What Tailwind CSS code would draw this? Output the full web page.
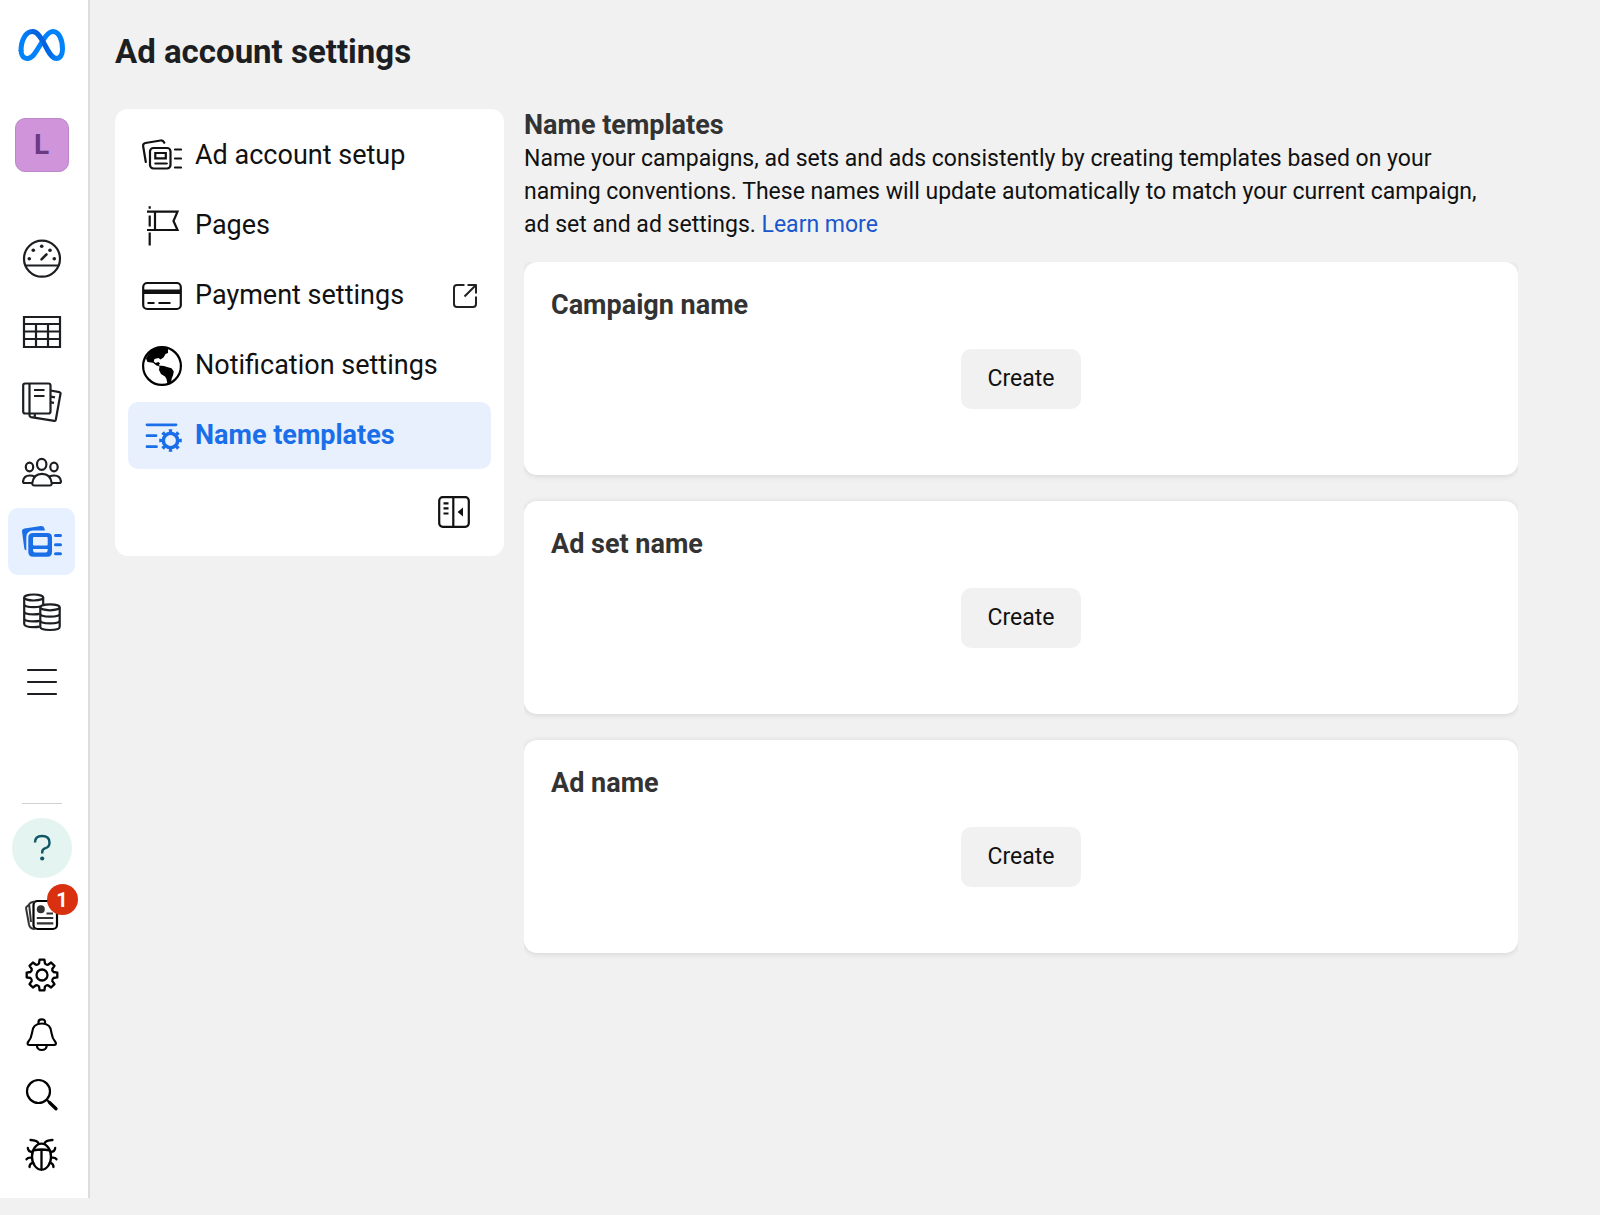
<!DOCTYPE html>
<html lang="en">
  <head>
    <meta charset="UTF-8" />
    <meta name="viewport" content="width=device-width, initial-scale=1.0" />
    <title>Ad account settings</title>
    <script src="https://cdn.jsdelivr.net/npm/@tailwindcss/browser@4"></script>
  </head>
  <body class="bg-[#f1f1f1] font-['Roboto',sans-serif] text-[#1c1e21] antialiased">
    <div class="flex min-h-screen">
      <!--==============  SIDEBAR  ==============-->
      <aside class="mb-[17px] flex w-[90px] shrink-0 flex-col items-center border-r-2 border-[#dcdcde] bg-white pr-[5px] text-[#1c1e21]">
        <a href="#" aria-label="Home" class="mt-[26px]">
          <svg class="h-10 w-[50px]" viewBox="0 0 50 40" fill="none">
            <defs>
              <linearGradient id="metaBlue" x1="4" y1="30" x2="40" y2="34" gradientUnits="userSpaceOnUse">
                <stop offset="0" stop-color="#0082fb" />
                <stop offset=".25" stop-color="#0064e0" />
                <stop offset=".7" stop-color="#0064e0" />
                <stop offset="1" stop-color="#0082fb" />
              </linearGradient>
            </defs>
            <path d="M25 16C29 9 32 5.500 36 5.500C42 5.500 45.500 14 45.500 23C45.500 29 43 32.500 39 32.500" stroke="#0082fb" stroke-width="5" />
            <path d="M25 16C19 26 15.500 32.500 10.500 32.500C6.500 32.500 4 29.500 4 24" stroke="#0082fb" stroke-width="5" />
            <path d="M4 25C4 13.500 9 5.500 15.500 5.500C26 5.500 30 32.500 39.500 32.500" stroke="url(#metaBlue)" stroke-width="5" />
          </svg>
        </a>

        <button type="button" class="mt-[52px] flex size-[54px] items-center justify-center rounded-[10px] border border-[#bd86c9] bg-[#cf94d9] text-[28px] font-bold text-[#6b3a85]">L</button>

        <nav class="mt-14 flex flex-col items-center gap-[3px]" aria-label="Tools">
          <a href="#" aria-label="Account overview" class="flex size-[67px] items-center justify-center">
            <svg class="size-10 overflow-visible" viewBox="0 3 40 40" fill="none" stroke="currentColor" stroke-width="2.200">
              <circle cx="20" cy="19.700" r="18" />
              <path d="M3.500 26.500h33" />
              <path d="M19.500 20.300l5-5" stroke-width="2.500" stroke-linecap="round" />
              <g fill="currentColor" stroke="none"><circle cx="7.300" cy="19.700" r="1.800" /><circle cx="11.300" cy="11.300" r="1.800" /><circle cx="19.700" cy="7.300" r="1.800" /><circle cx="28" cy="11.300" r="1.800" /><circle cx="32.300" cy="19.700" r="1.800" /></g>
            </svg>
          </a>
          <a href="#" aria-label="Campaigns" class="flex size-[67px] items-center justify-center">
            <svg class="size-10" viewBox="0 0 40 40" fill="none" stroke="currentColor" stroke-width="2.200">
              <path d="M2 5h36v30H2zM2 12h36M2 19.500h36M2 27h36M14 12v23M26 12v23" />
            </svg>
          </a>
          <a href="#" aria-label="Ads reporting" class="flex size-[67px] items-center justify-center">
            <svg class="size-10" viewBox="0 0 40 40" fill="none" stroke="currentColor" stroke-width="2.200" stroke-linejoin="round">
              <rect x="1.200" y="1.500" width="27.300" height="30" rx="2" />
              <path d="M7.500 1.500v30M12 8h10.500M12 14h10.500" />
              <path d="M28.500 8.500l9 1.700q1.300.3 1 1.600L33.800 37.800q-.3 1.200-1.500 1L9 35.200q-1.500-.3-1.500-2V31.500M29 14.600l4 .8M29 20.300l3 .6M13 32l-.3 2.500" />
            </svg>
          </a>
          <a href="#" aria-label="Audiences" class="flex size-[67px] items-center justify-center">
            <svg class="size-10" viewBox="0 0 40 40" fill="none" stroke="currentColor" stroke-width="2.200" stroke-linejoin="round">
              <ellipse cx="19.700" cy="12.300" rx="4.700" ry="5.500" />
              <ellipse cx="7.500" cy="15" rx="3.700" ry="4.300" />
              <ellipse cx="32" cy="15" rx="3.700" ry="4.300" />
              <path d="M12.500 33.500h15q2.500 0 2.200-2.500Q28.500 21.800 20 21.800T10.300 31q-.3 2.500 2.200 2.500Z" />
              <path d="M10 31H2.500Q.9 31 1.100 29Q2 23.500 7.700 23.500q3 0 5 1.200M30 31h7.300q1.800 0 1.600-2Q38 23.500 32.300 23.500q-3 0-5 1.200" />
            </svg>
          </a>
          <a href="#" aria-label="Ad account settings" aria-current="page" class="flex size-[67px] items-center justify-center rounded-[10px] bg-[#e7f0fe] text-[#1b6fe6]">
            <svg class="size-10" viewBox="0 0 40 40" fill="currentColor">
              <path d="M0 9.500Q-.2 7 2.500 6.500L19 4q2.500-.3 3.300 2l.7 2.500H11Q4.500 9 4.300 15v13.500q-1.800-.5-2-2Z" />
              <path fill-rule="evenodd" d="M11 11h14.500q4.500 0 4.500 4.500V30q0 4.700-4.500 4.700H11q-4.700 0-4.700-4.700V15.500Q6.300 11 11 11ZM12 15q-1 0-1 1v6.500q0 1 1 1h12.700q1 0 1-1V16q0-1-1-1ZM11.500 27q-.5 0-.5.500 0 3 2 3h10.700q2 0 2-3 0-.5-.5-.5Z" />
              <path d="M33.500 13.500h5M33.500 22.700h5M33.500 31.800h5" stroke="currentColor" stroke-width="3" stroke-linecap="round" />
            </svg>
          </a>
          <a href="#" aria-label="Billing" class="flex size-[67px] items-center justify-center">
            <svg class="size-10" viewBox="0 0 40 40" fill="none" stroke="currentColor" stroke-width="2.200">
              <ellipse cx="11.700" cy="5.500" rx="9.500" ry="3" />
              <path d="M2.200 5.500V32q0 3 9.500 3.200 3.500 0 6-.5M21.200 5.500v6.500M2.200 12q0 3.200 9.500 3.200 4 0 6.500-.7M2.200 19.200q0 3.200 9.500 3.200 3.500 0 6-.5M2.200 26.200q0 3.200 9.500 3.200 3.500 0 6-.5" />
              <ellipse cx="28" cy="15.300" rx="9.700" ry="3" />
              <path d="M18.300 15.300v19.500q0 3.200 9.700 3.200t9.700-3.200V15.300M18.300 21.500q0 3.200 9.700 3.200t9.700-3.200M18.300 28.200q0 3.200 9.700 3.200t9.700-3.200" />
            </svg>
          </a>
          <button type="button" aria-label="All tools" class="flex size-[67px] items-center justify-center">
            <svg class="size-10" viewBox="0 0 40 40" fill="none" stroke="currentColor" stroke-width="2.200" stroke-linecap="round">
              <path d="M6 8h28M6 20h28M6 32h28" />
            </svg>
          </button>
        </nav>

        <div class="mt-auto flex flex-col items-center pb-[13px] text-black">
          <hr class="mb-[14px] w-10 border-[#cfd0d2]" />
          <button type="button" aria-label="Help" class="flex size-[60px] items-center justify-center rounded-full bg-[#e4f4f0] text-[#0e5566]">
            <svg class="size-10" viewBox="0 0 40 40" fill="none" stroke="currentColor" stroke-width="2.400">
              <path d="M13 14.500Q13 8 20 8q7.500 0 7.500 6.500 0 4.500-4 5.700-3.300 1-3.300 4V25.500" />
              <circle cx="20.200" cy="30.500" r="2.100" fill="currentColor" stroke="none" />
            </svg>
          </button>
          <button type="button" aria-label="News, 1 new" class="relative mt-[7px] flex size-[60px] items-center justify-center">
            <svg class="size-10" viewBox="0 0 40 40" fill="none" stroke="currentColor" stroke-width="2.200" stroke-linejoin="round">
              <rect x="11.500" y="6" width="23.500" height="28" rx="4" />
              <circle cx="18.800" cy="14.300" r="4" fill="#333" stroke="none" />
              <path d="M24.500 18.500h6.500M14.800 23h16.500M14.800 28.300h16.500" stroke="#333" />
              <path d="M12.500 6.500L8.500 7.800Q7 8.500 7.200 10L9 27M7.300 9.500L5.500 11Q3.700 12 4.200 14L7 29.500q1 4.500 6 4.500" stroke="#333" stroke-width="2" />
            </svg>
            <span class="absolute -top-px left-[35px] flex size-[31px] items-center justify-center rounded-full bg-[#d9300f] text-xl font-bold text-white">1</span>
          </button>
          <button type="button" aria-label="Settings" class="flex size-[60px] items-center justify-center">
            <svg class="size-10" viewBox="-20 -20 40 40" fill="none" stroke="currentColor" stroke-width="2.300" stroke-linejoin="round">
              <path d="M-3-11.500-2.400-15.300H2.400L3-11.500Q4.600-9.800 6-10.250L9.100-12.500 12.500-9.100 10.250-6Q9.800-4.600 11.500-3L15.300-2.400V2.400L11.500 3Q9.800 4.600 10.250 6L12.500 9.100 9.100 12.500 6 10.250Q4.600 9.800 3 11.500L2.400 15.300H-2.400L-3 11.500Q-4.600 9.800-6 10.250L-9.100 12.500-12.500 9.100-10.250 6Q-9.800 4.600-11.500 3L-15.300 2.400V-2.400L-11.500-3Q-9.800-4.600-10.250-6L-12.500-9.100-9.100-12.500-6-10.250Q-4.600-9.800-3-11.500Z" />
              <circle r="5.500" />
            </svg>
          </button>
          <button type="button" aria-label="Notifications" class="flex size-[60px] items-center justify-center">
            <svg class="size-10" viewBox="0 0 40 40" fill="none" stroke="currentColor" stroke-width="2.200" stroke-linejoin="round">
              <path d="M16.500 8.500V7q0-2.700 3.300-2.700T23 7v1.500" />
              <path d="M7.500 30q-2.500 0-1.700-2.500 3.700-4.500 4.200-9.500.5-9.500 9.800-9.500t9.700 9.500q.5 5 4.200 9.500.8 2.500-1.700 2.500Z" />
              <path d="M14.800 30.500q.5 4.500 5 4.500t5-4.500" />
            </svg>
          </button>
          <button type="button" aria-label="Search" class="flex size-[60px] items-center justify-center">
            <svg class="size-10" viewBox="0 0 40 40" fill="none" stroke="currentColor" stroke-width="2.200">
              <circle cx="16.500" cy="16.500" r="11.500" />
              <path d="M24.800 24.800l2.700 2.700" />
              <path d="M27.500 27.500l6.500 6.300" stroke-width="3.300" stroke-linecap="round" />
            </svg>
          </button>
          <button type="button" aria-label="Report a problem" class="flex size-[60px] items-center justify-center">
            <svg class="size-10" viewBox="0 0 40 40" fill="none" stroke="currentColor" stroke-width="2.300" stroke-linecap="round">
              <ellipse cx="19.500" cy="21.700" rx="9.500" ry="13" />
              <path d="M11.500 15.500q8-2 16 0M19.500 14.500v20M8.500 5q7 .3 8 3.500M30.500 5q-7 .3-8 3.500" />
              <path d="M5.800 13q.5 3.800 4.500 4M33.200 13q-.5 3.800-4.500 4M4.500 24.300q1.500-2 5-1.500M34.500 24.300q-1.500-2-5-1.500M7.500 32q-.3-3 3.500-4.500M31.500 32q.3-3-3.500-4.500" />
            </svg>
          </button>
        </div>
      </aside>

      <!--==============  PAGE  ==============-->
      <div class="min-w-0 flex-1 pt-8 pr-[82px] pl-[25px]">
        <h1 class="text-[33px] leading-10 font-bold">Ad account settings</h1>

        <div class="mt-[37px] flex items-start gap-5">
          <!-- Settings menu -->
          <nav class="w-[389px] shrink-0 rounded-[13px] bg-white p-[13px] text-[27px] text-[#111]" aria-label="Settings">
            <ul class="space-y-[3px]">
              <li>
                <a href="#" class="flex h-[67px] items-center gap-[13px] px-[14px]">
                  <svg class="size-10" viewBox="0 0 40 40" fill="none" stroke="currentColor" stroke-width="2.200" stroke-linecap="round">
                    <rect x="8" y="12" width="20.500" height="20.500" rx="3.500" />
                    <path d="M13.300 17h10.500v5.300H13.300zM13.300 27.500h11.500M33 13.500h6M33 22.500h6M33 31.500h6" />
                    <path d="M3.800 26L1.200 10.500Q.7 7.500 3.500 7L18.500 4.500q2.700-.3 3.800 2.200" />
                  </svg>
                  Ad account setup
                </a>
              </li>
              <li>
                <a href="#" class="flex h-[67px] items-center gap-[13px] px-[14px]">
                  <svg class="size-10" viewBox="0 0 40 40" fill="none" stroke="currentColor" stroke-width="2.200">
                    <path d="M7.700.3v2.500M7.700 9.500v11M7.700 26.500v13M5 5.700h30.500l-4 9.300 4 9H5M13 5.700V24" />
                  </svg>
                  Pages
                </a>
              </li>
              <li>
                <a href="#" class="flex h-[67px] items-center gap-[13px] px-[14px]">
                  <svg class="size-10" viewBox="0 0 40 40" fill="none" stroke="currentColor" stroke-width="2.200">
                    <rect x="1.200" y="7" width="37.600" height="26" rx="4" />
                    <path d="M1 15.700h38" stroke-width="4.500" />
                    <path d="M5.500 27h7M16.500 27h12" />
                  </svg>
                  Payment settings
                  <svg class="ml-auto size-6" viewBox="0 0 24 24" fill="none" stroke="#222" stroke-width="2" stroke-linejoin="round">
                    <path d="M11.500 1H4Q1 1 1 4v16q0 3 3 3h16q3 0 3-3v-7.500M14.500 1H23v8.500M23 1L11.500 12.500" />
                  </svg>
                </a>
              </li>
              <li>
                <a href="#" class="flex h-[67px] items-center gap-[13px] px-[14px]">
                  <svg class="size-10" viewBox="0 0 40 40" fill="#000">
                    <circle cx="20" cy="20" r="18.900" fill="none" stroke="#000" stroke-width="2.200" />
                    <path d="M4 12.500Q8 3.500 15 1.500q6-1.500 11 .5v5l-2.500 1-2 3.500-3 2-2-1.500-4 1-.8 2.500 1.800 1.500 3-1 1.500 1.500-1.500 2L22 20l3 1 4.500 1.200 2.300 3.300-.8 4-1.300 3-.7 4.500-3.500 1.500-1-5.500-1.500-2.500-4-2.500-2-4 .5-3.500-3-1-3.500-2.800-5.500-.7Z" />
                  </svg>
                  Notification settings
                </a>
              </li>
              <li>
                <a href="#" aria-current="page" class="flex h-[67px] items-center gap-[13px] rounded-[10px] bg-[#e8f0fe] px-[14px] font-bold text-[#1a6fe8]">
                  <svg class="size-10" viewBox="0 0 40 40" fill="none" stroke="currentColor" stroke-width="2.800">
                    <path d="M5 8.800h29M5 19.700h9M5 30.700h9.500" stroke-linecap="round" />
                    <circle cx="28.500" cy="24.500" r="7.200" stroke-width="3.600" />
                    <circle cx="28.500" cy="24.500" r="9.700" stroke-width="3.200" pathLength="80" stroke-dasharray="4.400 5.600" stroke-dashoffset="2.200" />
                  </svg>
                  Name templates
                </a>
              </li>
            </ul>
            <div class="flex justify-end pt-[27px] pr-[21px] pb-[15px]">
              <button type="button" aria-label="Collapse menu">
                <svg class="size-8" viewBox="0 0 32 32" fill="none" stroke="currentColor" stroke-width="2.200">
                  <rect x="1.200" y="1.200" width="29.600" height="29.600" rx="3.500" />
                  <path d="M15.300 1v30M5.500 7.300h5M5.500 12.300h5M5.500 17.500h5" />
                  <path d="M19.500 16l5.500-4.500v9z" fill="currentColor" stroke="none" />
                </svg>
              </button>
            </div>
          </nav>

          <!-- Name templates -->
          <main class="min-w-0 flex-1">
            <h2 class="text-[27px] leading-[33px] font-bold text-[#333]">Name templates</h2>
            <p class="pr-[27px] text-[23px] leading-[33px] text-[#111]">
              Name your campaigns, ad sets and ads consistently by creating templates based on your naming conventions. These names will update automatically to match your current campaign, ad set and ad settings.
              <a href="#" class="text-[#1a56cc]">Learn more</a>
            </p>

            <div class="mt-[21px] space-y-[26px] overflow-hidden pb-4">
              <section class="rounded-[13px] bg-white px-[27px] pt-[27px] pb-[66px] shadow-[0_1px_6px_rgba(0,0,0,0.12)]">
                <h3 class="text-[27px] leading-[33px] font-bold text-[#333]">Campaign name</h3>
                <button type="button" class="mx-auto mt-[27px] block h-[60px] rounded-[10px] bg-[#f1f1f1] px-[27px] text-[23px] text-[#111]">Create</button>
              </section>
              <section class="rounded-[13px] bg-white px-[27px] pt-[27px] pb-[66px] shadow-[0_1px_6px_rgba(0,0,0,0.12)]">
                <h3 class="text-[27px] leading-[33px] font-bold text-[#333]">Ad set name</h3>
                <button type="button" class="mx-auto mt-[27px] block h-[60px] rounded-[10px] bg-[#f1f1f1] px-[27px] text-[23px] text-[#111]">Create</button>
              </section>
              <section class="rounded-[13px] bg-white px-[27px] pt-[27px] pb-[66px] shadow-[0_1px_6px_rgba(0,0,0,0.12)]">
                <h3 class="text-[27px] leading-[33px] font-bold text-[#333]">Ad name</h3>
                <button type="button" class="mx-auto mt-[27px] block h-[60px] rounded-[10px] bg-[#f1f1f1] px-[27px] text-[23px] text-[#111]">Create</button>
              </section>
            </div>
          </main>
        </div>
      </div>
    </div>
  </body>
</html>
